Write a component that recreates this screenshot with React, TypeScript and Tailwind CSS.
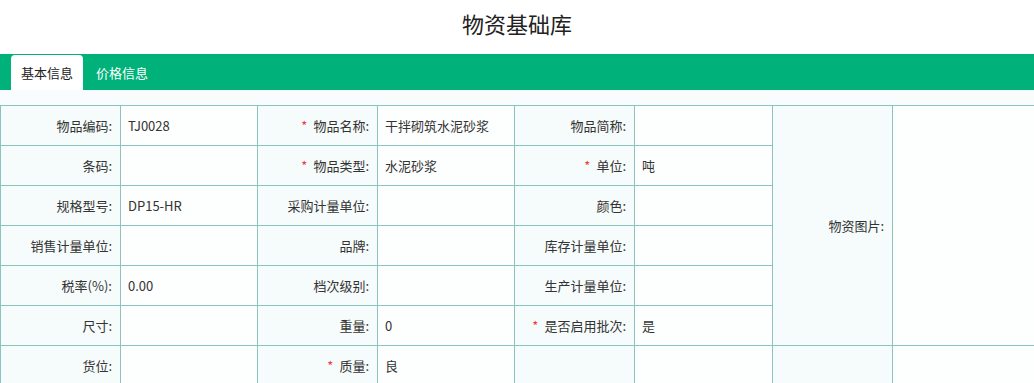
import { Fragment } from 'react';

const rows: { label: string; value: string; req?: boolean }[][] = [
  [
    { label: '物品编码', value: 'TJ0028' },
    { label: '物品名称', value: '干拌砌筑水泥砂浆', req: true },
    { label: '物品简称', value: '' },
  ],
  [
    { label: '条码', value: '' },
    { label: '物品类型', value: '水泥砂浆', req: true },
    { label: '单位', value: '吨', req: true },
  ],
  [
    { label: '规格型号', value: 'DP15-HR' },
    { label: '采购计量单位', value: '' },
    { label: '颜色', value: '' },
  ],
  [
    { label: '销售计量单位', value: '' },
    { label: '品牌', value: '' },
    { label: '库存计量单位', value: '' },
  ],
  [
    { label: '税率(%)', value: '0.00' },
    { label: '档次级别', value: '' },
    { label: '生产计量单位', value: '' },
  ],
  [
    { label: '尺寸', value: '' },
    { label: '重量', value: '0' },
    { label: '是否启用批次', value: '是', req: true },
  ],
];

const lastRow = [
  { label: '货位', value: '' },
  { label: '质量', value: '良', req: true },
  { label: '', value: '' },
  { label: '', value: '' },
];

const labelCls =
  'border border-[#8cc3bf] bg-[#f6fbfb] text-right pr-[8px] h-[40px] p-0 font-normal';
const valueCls = 'border border-[#8cc3bf] bg-[#fdfefe] text-left pl-[7px] h-[40px] p-0';

const Label = ({ label, req }: { label: string; req?: boolean }) => (
  <>
    {req && <span className="text-[#f23c3c] mr-[6px]">*</span>}
    {label && `${label}:`}
  </>
);

const App = () => {
  return (
    <div
      className="w-[1034px] h-[383px] overflow-hidden bg-[#f9fcfc] text-[#333] text-[13px]"
      style={{ fontFamily: '"Noto Sans CJK SC", "Liberation Sans", sans-serif' }}
    >
      <div className="bg-white h-[54px] pt-[8px] text-center text-[22px] leading-[30px] text-[#222]">
        物资基础库
      </div>
      <div className="bg-[#00b179] h-[36px] flex items-end pl-[11px] gap-[3px]">
        <div className="bg-white h-[35px] px-[10px] rounded-t-[4px] flex items-center text-[#222]">
          基本信息
        </div>
        <div className="h-[35px] px-[10px] flex items-center text-white">价格信息</div>
      </div>
      <div className="pt-[15px]">
        <table className="table-fixed border-collapse w-[1100px]">
          <colgroup>
            <col className="w-[120px]" />
            <col className="w-[137px]" />
            <col className="w-[120px]" />
            <col className="w-[137px]" />
            <col className="w-[120px]" />
            <col className="w-[138px]" />
            <col className="w-[120px]" />
            <col />
          </colgroup>
          <tbody>
            {rows.map((row, i) => (
              <tr key={i}>
                {row.map((c, j) => (
                  <Fragment key={j}>
                    <td className={labelCls}>
                      <Label label={c.label} req={c.req} />
                    </td>
                    <td className={valueCls}>{c.value}</td>
                  </Fragment>
                ))}
                {i === 0 && (
                  <>
                    <td rowSpan={6} className={labelCls}>
                      物资图片:
                    </td>
                    <td rowSpan={6} className={valueCls}></td>
                  </>
                )}
              </tr>
            ))}
            <tr>
              {lastRow.map((c, j) => (
                <Fragment key={j}>
                  <td className={labelCls}>
                    <Label label={c.label} req={c.req} />
                  </td>
                  <td className={valueCls}>{c.value}</td>
                </Fragment>
              ))}
            </tr>
          </tbody>
        </table>
      </div>
    </div>
  );
};

export default App;
